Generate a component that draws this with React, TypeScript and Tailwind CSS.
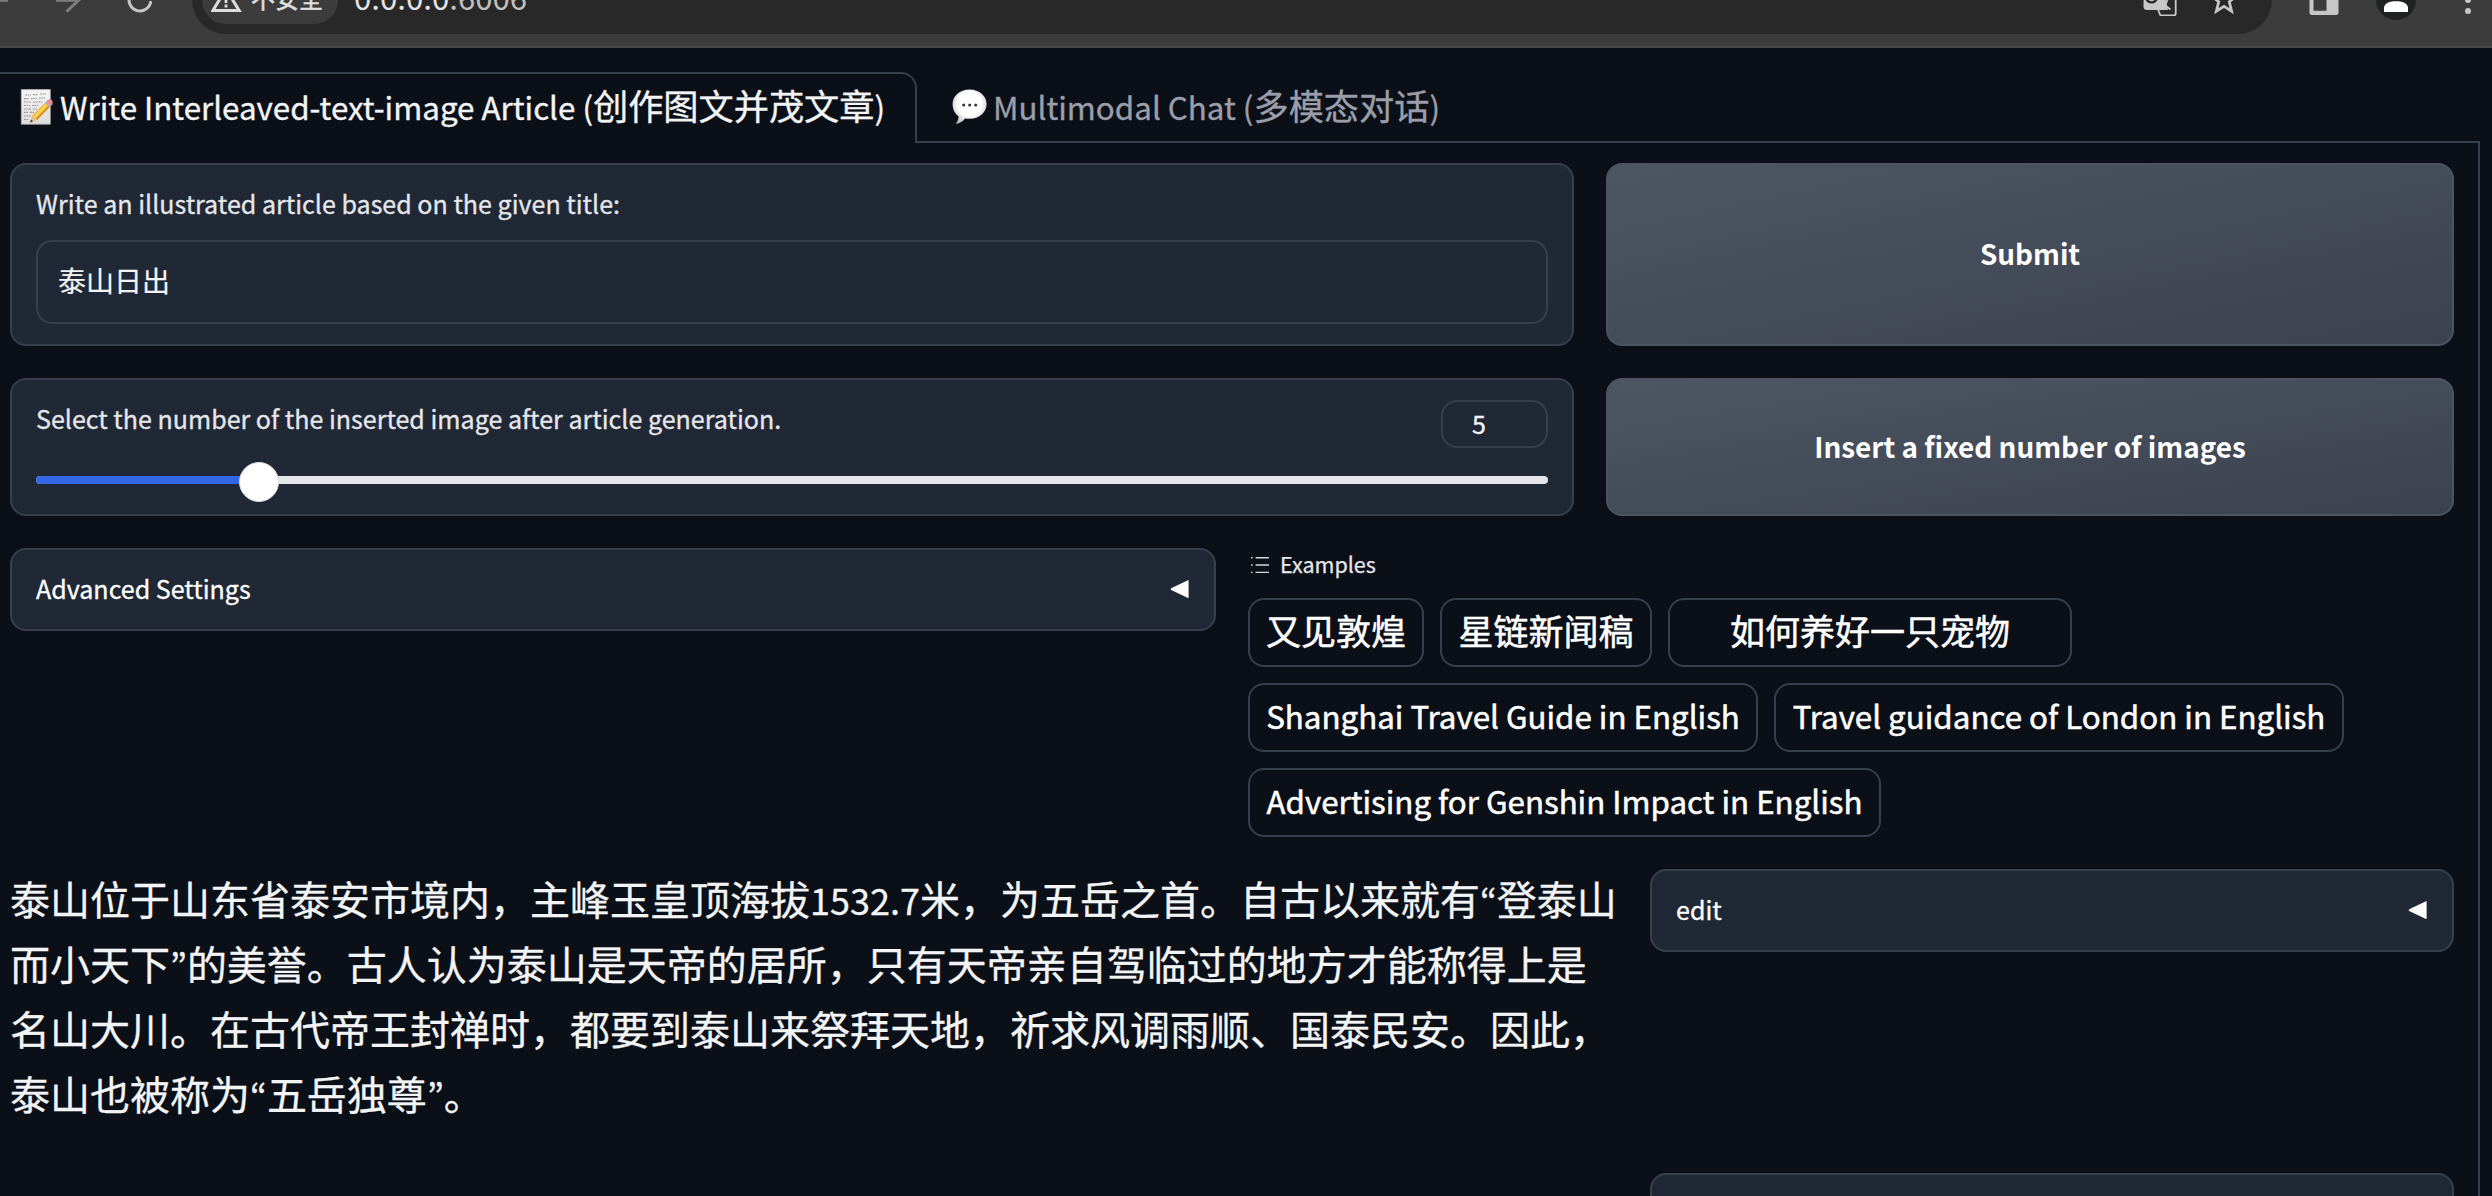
import type { ReactNode } from "react";

function BrowserBar() {
  return (
    <header className="flex h-12 items-start overflow-hidden border-b-2 border-[#474747] bg-[#3c3c3c]">
      <svg className="h-12 w-10 shrink-0" viewBox="0 0 40 48" fill="none" stroke="#7e7e7e" strokeWidth="2.8">
        <path d="M-14 0.4H8M-14 0.4L-2 -11M-14 0.4L-2 12" />
      </svg>
      <svg className="h-12 w-[60px] shrink-0" viewBox="0 0 60 48" fill="none" stroke="#7e7e7e" strokeWidth="2.8">
        <path d="M16 0.4H39M27 -12L39 0L26.5 11.6" />
      </svg>
      <svg className="h-12 w-[92px] shrink-0" viewBox="0 0 92 48" fill="none" stroke="#c7c7c7" strokeWidth="3">
        <path d="M50.8 1.2A10.9 10.9 0 1 1 46 -9" />
      </svg>
      <div className="-mt-[34px] flex h-[68px] w-[2080px] shrink-0 items-end rounded-full bg-[#282828] pl-2.5">
        <div className="mb-2.5 flex h-12 w-[136px] shrink-0 items-end rounded-full bg-[#3c3c3c] pl-[9px]">
          <svg className="h-12 w-10 shrink-0" viewBox="0 0 40 48">
            <path d="M15 13L1.8 34.6H28.2Z" fill="none" stroke="#dedede" strokeWidth="3" />
            <path d="M13.6 20h2.8v7h-2.8zM13.6 28.6h2.8v2.8h-2.8z" fill="#dedede" />
          </svg>
          <span className="mb-2.5 text-2xl leading-8 whitespace-nowrap text-[#e0e0e0] [-webkit-text-stroke:0.5px]">不安全</span>
        </div>
        <div className="mb-[13px] ml-4 text-[31.2px] leading-[48px] whitespace-nowrap text-[#e3e3e3]">
          0.0.0.0<span className="text-[#c0c0c0]">:6006</span>
        </div>
        <svg className="mb-[18px] ml-auto h-[34px] w-9 shrink-0" viewBox="0 -18 36 34">
          <path d="M2 -18h18l6 28h-21a3.5 3.5 0 0 1-3.5-3.5z" fill="#c7c7c7" />
          <circle cx="9.5" cy="-3" r="5.4" fill="none" stroke="#282828" strokeWidth="2.4" />
          <path d="M21 -7h10.2a2.5 2.5 0 0 1 2.5 2.5v18a2 2 0 0 1-2 2H18.5L15.8 9" fill="none" stroke="#c7c7c7" strokeWidth="1.8" />
          <path d="M19 -2h9M26 -2Q24 6 18 9.4M20 0Q23 6 28.5 9.6" fill="none" stroke="#c7c7c7" strokeWidth="1.8" />
        </svg>
        <svg className="mr-[36px] mb-[18px] ml-[34px] h-[34px] w-6 shrink-0" viewBox="0 -18 24 34">
          <path d="M12 -13L15.3 -4.6L24 -3.9L17.3 1.8L19.6 11.2L12 6.3L4.4 11.2L6.7 1.8L0 -3.9L8.7 -4.6Z" fill="none" stroke="#c7c7c7" strokeWidth="2.8" />
        </svg>
      </div>
      <svg className="ml-[37px] h-12 w-[31px] shrink-0" viewBox="0 0 31 48">
        <path fillRule="evenodd" d="M0.5 -12H29.5V12.5a2.5 2.5 0 0 1-2.5 2.5H3a2.5 2.5 0 0 1-2.5-2.5ZM4.5 -6H17.5V10.8H4.5Z" fill="#c7c7c7" />
      </svg>
      <svg className="ml-9 h-12 w-10 shrink-0" viewBox="0 0 40 48">
        <circle cx="20" r="20" fill="#1f2221" />
        <path d="M8 12V8C8 3 14 1.2 20 1.2S32 3 32 8V12Z" fill="#fff" />
      </svg>
      <svg className="ml-12 h-12 w-2 shrink-0" viewBox="0 0 8 48" fill="#c7c7c7">
        <circle cx="4" cy="0" r="3" />
        <circle cx="4" cy="11" r="3" />
      </svg>
    </header>
  );
}

function MemoIcon() {
  return (
    <svg className="h-9 w-9 shrink-0" viewBox="0 0 36 36">
      <defs>
        <linearGradient id="paper" x2="0" y2="1">
          <stop stopColor="#f5f5f5" />
          <stop offset="1" stopColor="#dcdcdc" />
        </linearGradient>
      </defs>
      <path d="M1.3 .6H30.3V35.2H1.3Z" fill="url(#paper)" stroke="#b9b9b9" strokeWidth=".7" />
      <path
        d="M5 6h6M13 5.6h5M20 5h6M4 9.6h5M11 9.5h6M19 9h6M4 13h7M13 13h9M4 16.5h6M12 16.5h6M4 20h7M13 20h4M4 23.4h4M10 23.4h4M4 27h7M4 30.5h5"
        stroke="#979797"
        strokeWidth="1.1"
        strokeDasharray="1.8 .7"
      />
      <path d="M10 33.6L12.6 26.2L25.3 13.4L30 17.6L17.2 30.8Z" fill="#f2b632" />
      <path d="M13.8 27.4L26.5 14.6L27.7 15.7L15 28.6Z" fill="#ffdf70" />
      <path d="M16.2 29.9L29 16.8L30 17.6L17.2 30.8Z" fill="#c98412" />
      <path d="M10 33.6L12.6 26.2L17.2 30.8Z" fill="#e3c193" />
      <path d="M10 33.6L11.1 30.6L13 32.6Z" fill="#3b3b3b" />
      <path d="M24.7 14L26.5 12.2L31.2 16.4L29.5 18.2Z" fill="#a9b4bb" />
      <path d="M26.2 12.4L27.6 11A3.3 3.3 0 0 1 32.4 15.2L30.9 16.7Z" fill="#e98d8d" />
    </svg>
  );
}

function BubbleIcon() {
  return (
    <svg className="h-9 w-9 shrink-0" viewBox="0 0 36 36">
      <defs>
        <radialGradient id="bubble" cx=".5" cy=".42" r=".58">
          <stop offset=".6" stopColor="#fff" />
          <stop offset="1" stopColor="#c4c4c4" />
        </radialGradient>
      </defs>
      <path
        d="M17.6 .4C27.5 .4 34.6 6.8 34.6 15S27.5 29.8 17.6 29.8C16 29.8 14.4 29.7 13 29.4C11.2 32 7.6 34.4 3.6 35C5.4 33 6.6 30 6.6 27.2C2.8 24.6 .6 20.4 .6 15C.6 6.8 7.7 .4 17.6 .4Z"
        fill="url(#bubble)"
      />
      <g fill="#333">
        <circle cx="11.7" cy="16" r="1.5" />
        <circle cx="17.7" cy="16" r="1.5" />
        <circle cx="23.7" cy="16" r="1.5" />
      </g>
    </svg>
  );
}

function Tabs() {
  return (
    <nav className="mt-6 flex h-[71px] w-[2480px]">
      <div className="flex w-[917px] shrink-0 items-start rounded-tr-2xl border-t-2 border-r-2 border-[#373f4c] pl-5 text-[35.2px] leading-[62px] whitespace-nowrap text-[#f3f4f6] [-webkit-text-stroke:0.35px]">
        <span className="mt-[15px] mr-1 flex">
          <MemoIcon />
        </span>
        <div>
          <span className="text-[31.35px] leading-none">Write Interleaved-text-image Article (</span>创作图文并茂文章
          <span className="text-[31.35px] leading-none">)</span>
        </div>
      </div>
      <div className="flex flex-1 items-start border-b-2 border-[#373f4c] pt-0.5 pl-[35px] text-[35.2px] leading-[62px] whitespace-nowrap text-[#9b9eaa] [-webkit-text-stroke:0.35px]">
        <span className="mt-[15px] mr-[5px] flex">
          <BubbleIcon />
        </span>
        <div>
          <span className="text-[31.35px] leading-none">Multimodal Chat (</span>多模态对话
          <span className="text-[31.35px] leading-none">)</span>
        </div>
      </div>
    </nav>
  );
}

function ActionButton({ children }: { children: ReactNode }) {
  return (
    <button className="flex flex-1 items-center justify-center rounded-2xl border-2 border-[#4b5460] bg-linear-to-br from-[#4e5663] to-[#3b414f] pb-px text-[27.9px] font-bold text-white">
      {children}
    </button>
  );
}

function Accordion({ label, className }: { label: string; className: string }) {
  return (
    <div
      className={`flex h-[83px] shrink-0 items-start justify-between rounded-2xl border-2 border-[#373f4c] bg-[#212835] px-6 text-[25.05px] leading-[76px] text-white [-webkit-text-stroke:0.3px] ${className}`}
    >
      <span>{label}</span>
      {label && (
        <svg className="mt-[29px] h-5 w-5" viewBox="0 0 20 20" fill="#fff">
          <path d="M18.6 1.6V18.6Q18.6 19.2 18 18.9L1.2 11Q.2 10.2 1.2 9.3L18 1.2Q18.6 .9 18.6 1.6Z" />
        </svg>
      )}
    </div>
  );
}

function Example({ children, className }: { children: ReactNode; className: string }) {
  return (
    <div
      className={`h-[69px] rounded-2xl border-2 border-[#373f4c] text-center whitespace-nowrap text-white [-webkit-text-stroke:0.5px] ${className}`}
    >
      {children}
    </div>
  );
}

function Num({ children }: { children: ReactNode }) {
  return <span className="text-[36px] leading-none">{children}</span>;
}

function Quote({ children }: { children: ReactNode }) {
  return <span className="font-['Noto_Sans_CJK_KR',sans-serif] text-[35.6px] leading-none">{children}</span>;
}

export default function App() {
  return (
    <div className="h-[1196px] w-[2492px] overflow-hidden bg-[#0b0f17] font-['Noto_Sans_CJK_SC',sans-serif]">
      <BrowserBar />
      <Tabs />
      <main className="h-[1060px] w-[2480px] border-r-2 border-[#373f4c] pt-5 pr-6 pl-2.5">
        <section className="flex h-[183px] gap-8">
          <div className="w-[1564px] rounded-2xl border-2 border-[#373f4c] bg-[#212835] p-6">
            <div className="text-[25.05px] leading-7 text-[#e5e7eb] [-webkit-text-stroke:0.3px]">
              Write an illustrated article based on the given title:
            </div>
            <div className="mt-[23px] h-[84px] rounded-2xl border-2 border-[#373f4c] pl-5 text-[28px] leading-[76px] text-[#f3f4f6] [-webkit-text-stroke:0.2px]">
              泰山日出
            </div>
          </div>
          <ActionButton>Submit</ActionButton>
        </section>

        <section className="mt-8 flex h-[138px] gap-8">
          <div className="w-[1564px] rounded-2xl border-2 border-[#373f4c] bg-[#212835] px-6 pt-5">
            <div className="flex items-start justify-between">
              <div className="mt-1 text-[25.05px] leading-7 text-[#e5e7eb] [-webkit-text-stroke:0.3px]">
                Select the number of the inserted image after article generation.
              </div>
              <div className="h-12 w-[107px] rounded-2xl border-2 border-[#373f4c] pl-[29px] text-[25.05px] leading-[42px] text-[#f3f4f6] [-webkit-text-stroke:0.3px]">
                5
              </div>
            </div>
            <div className="relative mt-7 h-2 rounded bg-[#e5e6ea]">
              <div className="h-2 w-[223px] rounded-l bg-[#3366e6]" />
              <div className="absolute -top-3.5 left-[203px] size-10 rounded-full border border-[#dcdcdc] bg-white" />
            </div>
          </div>
          <ActionButton>Insert a fixed number of images</ActionButton>
        </section>

        <section className="mt-8 flex h-[289px] gap-8">
          <Accordion label="Advanced Settings" className="w-[1206px]" />
          <div className="flex-1">
            <div className="flex h-[50px] items-start pl-[3px] text-[21.5px] leading-[31px] text-[#e5e7eb] [-webkit-text-stroke:0.25px]">
              <svg className="mt-2 mr-[11px] h-[18px] w-[18px]" viewBox="0 0 18 18" stroke="#d5d7db" strokeWidth="1.4" fill="none">
                <path d="M0 1.7h1.6M4.6 1.7H18M0 9h1.6M4.6 9H18M0 16.4h1.6M4.6 16.4H18" />
              </svg>
              Examples
            </div>
            <div className="flex flex-col gap-4">
              <div className="flex gap-4 text-[35px] leading-[59px]">
                <Example className="w-44">又见敦煌</Example>
                <Example className="w-[212px]">星链新闻稿</Example>
                <Example className="w-[404px]">如何养好一只宠物</Example>
              </div>
              <div className="flex gap-4 text-[31.3px] leading-[61px]">
                <Example className="w-[510px]">Shanghai Travel Guide in English</Example>
                <Example className="w-[570px]">Travel guidance of London in English</Example>
              </div>
              <div className="flex gap-4 text-[31.3px] leading-[61px]">
                <Example className="w-[633px]">Advertising for Genshin Impact in English</Example>
              </div>
            </div>
          </div>
        </section>

        <section className="mt-8 flex justify-between">
          <article className="-mt-[3px] w-[1620px] text-[40px] leading-[65px] whitespace-nowrap text-[#f3f4f6] [-webkit-text-stroke:0.3px]">
            <div>
              泰山位于山东省泰安市境内，主峰玉皇顶海拔<Num>1532.7</Num>米，为五岳之首。自古以来就有<Quote>“</Quote>登泰山
            </div>
            <div>
              而小天下<Quote>”</Quote>的美誉。古人认为泰山是天帝的居所，只有天帝亲自驾临过的地方才能称得上是
            </div>
            <div>名山大川。在古代帝王封禅时，都要到泰山来祭拜天地，祈求风调雨顺、国泰民安。因此，</div>
            <div>
              泰山也被称为<Quote>“</Quote>五岳独尊<Quote>”</Quote>。
            </div>
          </article>
          <div className="flex w-[804px] flex-col gap-[221px]">
            <Accordion label="edit" className="w-full" />
            <Accordion label="" className="w-full" />
          </div>
        </section>
      </main>
    </div>
  );
}
